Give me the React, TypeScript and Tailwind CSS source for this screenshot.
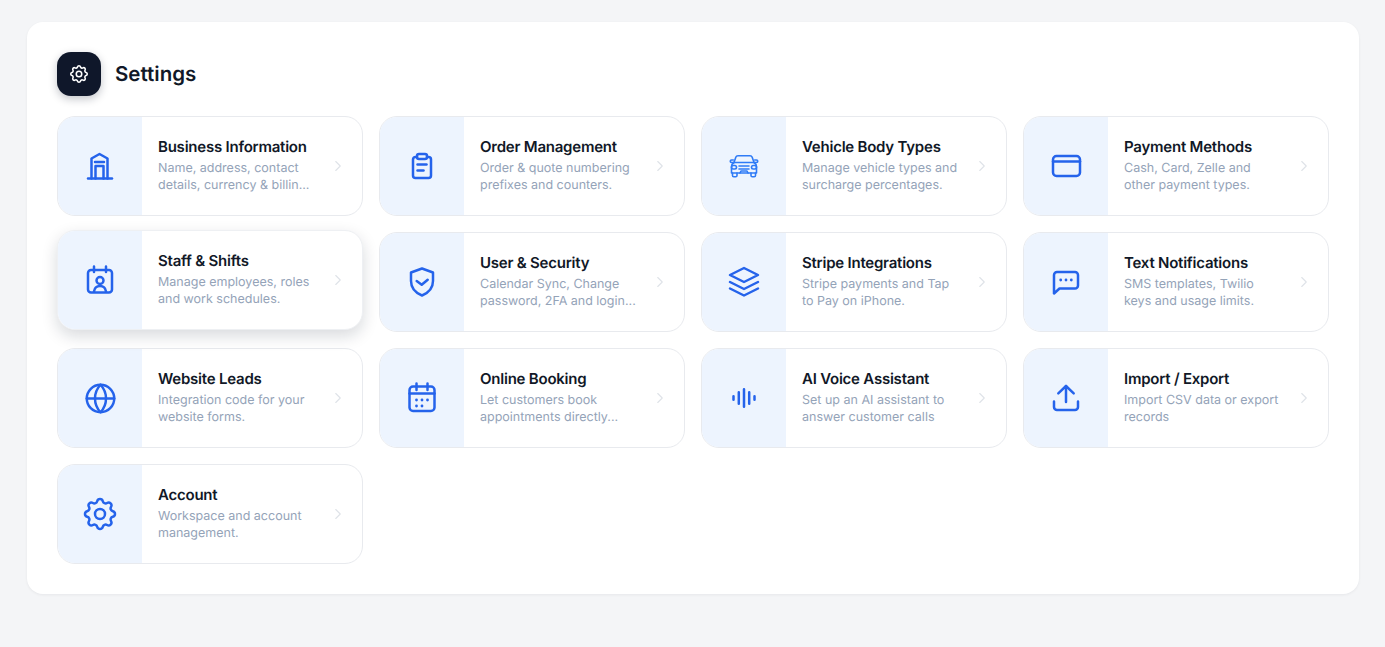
import type { ReactNode } from "react"
import { ChevronRight, Globe } from "lucide-react"
import { HiOutlineCog } from "react-icons/hi"

const strokeProps = {
  fill: "none",
  stroke: "currentColor",
  strokeWidth: 2.5,
  strokeLinecap: "round" as const,
  strokeLinejoin: "round" as const,
}

function BuildingIcon() {
  return (
    <svg viewBox="0 0 32 32" className="h-8 w-8" {...strokeProps}>
      <path d="M4 28.500h24" />
      <path d="M7.500 28.500V8.500L15.500 4l8 4.500v20" />
      <path d="M11 12h9" />
      <path d="M11.500 28.500V16h8v12.500" />
    </svg>
  )
}

function ClipboardIcon() {
  return (
    <svg viewBox="0 0 32 32" className="h-8 w-8" {...strokeProps}>
      <path d="M11 7H9.500A2.500 2.500 0 0 0 7 9.500v16A2.500 2.500 0 0 0 9.500 28h13a2.500 2.500 0 0 0 2.500-2.500v-16A2.500 2.500 0 0 0 22.500 7H21" />
      <rect x="11" y="4" width="10" height="5" rx="2" />
      <path d="M11.500 14.500h9" />
      <path d="M11.500 20.500h6" />
    </svg>
  )
}

function CarIcon() {
  return (
    <svg viewBox="0 0 32 32" className="h-8 w-8 text-[#2f7bf6]" fill="none" stroke="currentColor" strokeWidth={1.6} strokeLinecap="round" strokeLinejoin="round">
      <path d="M6 12.500l1.800-5.200C8.200 6.200 9 5.800 10 5.800h12c1 0 1.800.4 2.200 1.500l1.800 5.200" />
      <path d="M6 12.500c-1.500 1-2.500 2-2.500 4V23h25v-6.500c0-2-1-3-2.500-4z" />
      <path d="M6 12.500H3.500a1.200 1.200 0 0 1 0-2.500h1.800M26 12.500h2.500a1.200 1.200 0 0 0 0-2.500h-1.800" />
      <rect x="3.500" y="15.500" width="5" height="3.500" rx="1.700" />
      <rect x="23.500" y="15.500" width="5" height="3.500" rx="1.700" />
      <path d="M11 16h10M11 19h10M12 23l1-2h6l1 2" />
      <path d="M4.500 23v2.500c0 .8.500 1.300 1.300 1.300h1.900c.8 0 1.300-.5 1.300-1.300V23M23 23v2.500c0 .8.500 1.300 1.300 1.300h1.900c.8 0 1.300-.5 1.300-1.300V23" />
    </svg>
  )
}

function CardIcon() {
  return (
    <svg viewBox="0 0 32 32" className="h-8 w-8" {...strokeProps}>
      <rect x="3" y="6" width="27" height="20" rx="3.500" />
      <path d="M3 11.500h27" />
    </svg>
  )
}

function StaffIcon() {
  return (
    <svg viewBox="0 0 32 32" className="h-8 w-8" {...strokeProps}>
      <rect x="4" y="6" width="24" height="22.500" rx="3" />
      <path d="M10 2.500V8M22 2.500V8" />
      <circle cx="16" cy="16.500" r="3.500" />
      <path d="M10 27.500c.5-3.500 2.800-5.500 6-5.500s5.500 2 6 5.500" />
    </svg>
  )
}

function ShieldIcon() {
  return (
    <svg viewBox="0 0 32 32" className="h-8 w-8" {...strokeProps}>
      <path d="M16 2.500L27 6.500V15C27 22 22 27 16 29.500C10 27 5 22 5 15V6.500Z" />
      <path d="M10.700 15L15.700 18.700L21.700 13.700" />
    </svg>
  )
}

function LayersIcon() {
  return (
    <svg viewBox="0 0 32 32" className="h-8 w-8" {...strokeProps}>
      <path d="M16 2L30 9L16 16L2 9Z" />
      <path d="M2 16L16 23L30 16" />
      <path d="M2 22.500L16 29.500L30 22.500" />
    </svg>
  )
}

function ChatIcon() {
  return (
    <svg viewBox="0 0 32 32" className="h-8 w-8" {...strokeProps}>
      <path d="M4 27.500V9a3 3 0 0 1 3-3h18a3 3 0 0 1 3 3v10.500a3 3 0 0 1-3 3H9.500z" />
      <circle cx="10.700" cy="14" r="1.400" fill="currentColor" stroke="none" />
      <circle cx="16" cy="14" r="1.400" fill="currentColor" stroke="none" />
      <circle cx="21.300" cy="14" r="1.400" fill="currentColor" stroke="none" />
    </svg>
  )
}

function CalendarIcon() {
  return (
    <svg viewBox="0 0 32 32" className="h-8 w-8" {...strokeProps}>
      <rect x="3.500" y="4.500" width="25" height="24.500" rx="3.500" />
      <path d="M3.500 11.500h25" />
      <path d="M10.500 1.500V8M21.500 1.500V8" />
      <g fill="currentColor" stroke="none">
        <circle cx="10.500" cy="18" r="1.400" />
        <circle cx="16" cy="18" r="1.400" />
        <circle cx="21.500" cy="18" r="1.400" />
        <circle cx="10.500" cy="24" r="1.400" />
        <circle cx="16" cy="24" r="1.400" />
      </g>
    </svg>
  )
}

function VoiceIcon() {
  return (
    <svg viewBox="0 0 32 32" className="h-8 w-8" {...strokeProps}>
      <path d="M5.500 14.200v3.600M10.800 10.200v11.600M16 7.200v17.600M21.200 10.200v11.600M26.500 14.200v3.600" />
    </svg>
  )
}

function UploadIcon() {
  return (
    <svg viewBox="0 0 32 32" className="h-8 w-8" {...strokeProps}>
      <path d="M4 19.500V25a3 3 0 0 0 3 3h18a3 3 0 0 0 3-3v-5.500" />
      <path d="M16 20V4" />
      <path d="M8.300 11.300L16 4l7.700 7.300" />
    </svg>
  )
}

type Item = { title: string; lines: [string, string]; icon: ReactNode; hovered?: boolean }

const items: Item[] = [
  { title: "Business Information", lines: ["Name, address, contact", "details, currency & billin..."], icon: <BuildingIcon /> },
  { title: "Order Management", lines: ["Order & quote numbering", "prefixes and counters."], icon: <ClipboardIcon /> },
  { title: "Vehicle Body Types", lines: ["Manage vehicle types and", "surcharge percentages."], icon: <CarIcon /> },
  { title: "Payment Methods", lines: ["Cash, Card, Zelle and", "other payment types."], icon: <CardIcon /> },
  { title: "Staff & Shifts", lines: ["Manage employees, roles", "and work schedules."], icon: <StaffIcon />, hovered: true },
  { title: "User & Security", lines: ["Calendar Sync, Change", "password, 2FA and login..."], icon: <ShieldIcon /> },
  { title: "Stripe Integrations", lines: ["Stripe payments and Tap", "to Pay on iPhone."], icon: <LayersIcon /> },
  { title: "Text Notifications", lines: ["SMS templates, Twilio", "keys and usage limits."], icon: <ChatIcon /> },
  { title: "Website Leads", lines: ["Integration code for your", "website forms."], icon: <Globe className="h-[33px] w-[33px]" strokeWidth={1.8} /> },
  { title: "Online Booking", lines: ["Let customers book", "appointments directly..."], icon: <CalendarIcon /> },
  { title: "AI Voice Assistant", lines: ["Set up an AI assistant to", "answer customer calls"], icon: <VoiceIcon /> },
  { title: "Import / Export", lines: ["Import CSV data or export", "records"], icon: <UploadIcon /> },
  { title: "Account", lines: ["Workspace and account", "management."], icon: <HiOutlineCog className="h-10 w-10 [&_path]:stroke-[1.5]" /> },
]

function SettingsCard({ item }: { item: Item }) {
  return (
    <div
      className={
        "flex h-[100px] overflow-hidden rounded-[18px] border bg-white " +
        (item.hovered
          ? "-translate-y-0.5 border-[#eef0f3] shadow-[0_6px_16px_rgba(15,23,42,0.16)]"
          : "border-[#e8eaee]")
      }
    >
      <div className="flex w-[84px] shrink-0 items-center justify-center bg-[#edf4fe] text-[#2563eb]">
        {item.icon}
      </div>
      <div className="flex flex-1 items-center pr-[15px] pl-4">
        <div className="flex-1 pb-0.5">
          <div className="text-[15px] leading-5 font-semibold tracking-[-0.015em] text-[#111827]">{item.title}</div>
          <div className="mt-[3px] text-[12.5px] leading-[17px] text-[#94a3b8]">
            {item.lines[0]}
            <br />
            {item.lines[1]}
          </div>
        </div>
        <ChevronRight className="h-[18px] w-[18px] text-[#dfe3e8]" strokeWidth={1.5} />
      </div>
    </div>
  )
}

export default function App() {
  return (
    <div className="min-h-[647px] bg-[#f4f5f7] pt-[22px] pr-[26px] pl-[27px] font-['Inter',sans-serif] [text-rendering:geometricPrecision]">
      <div className="rounded-2xl bg-white p-[30px] shadow-[0_1px_3px_rgba(15,23,42,0.06)]">
        <div className="mb-5 flex items-center gap-3.5">
          <div className="flex h-11 w-11 items-center justify-center rounded-[14px] bg-[#0f172a] text-white shadow-[0_3px_8px_rgba(15,23,42,0.25)]">
            <HiOutlineCog className="h-[22px] w-[22px] [&_path]:stroke-[1.7]" />
          </div>
          <h1 className="text-[20.5px] font-semibold text-[#111827]">Settings</h1>
        </div>
        <div className="grid grid-cols-4 gap-4">
          {items.map((item) => (
            <SettingsCard key={item.title} item={item} />
          ))}
        </div>
      </div>
    </div>
  )
}
